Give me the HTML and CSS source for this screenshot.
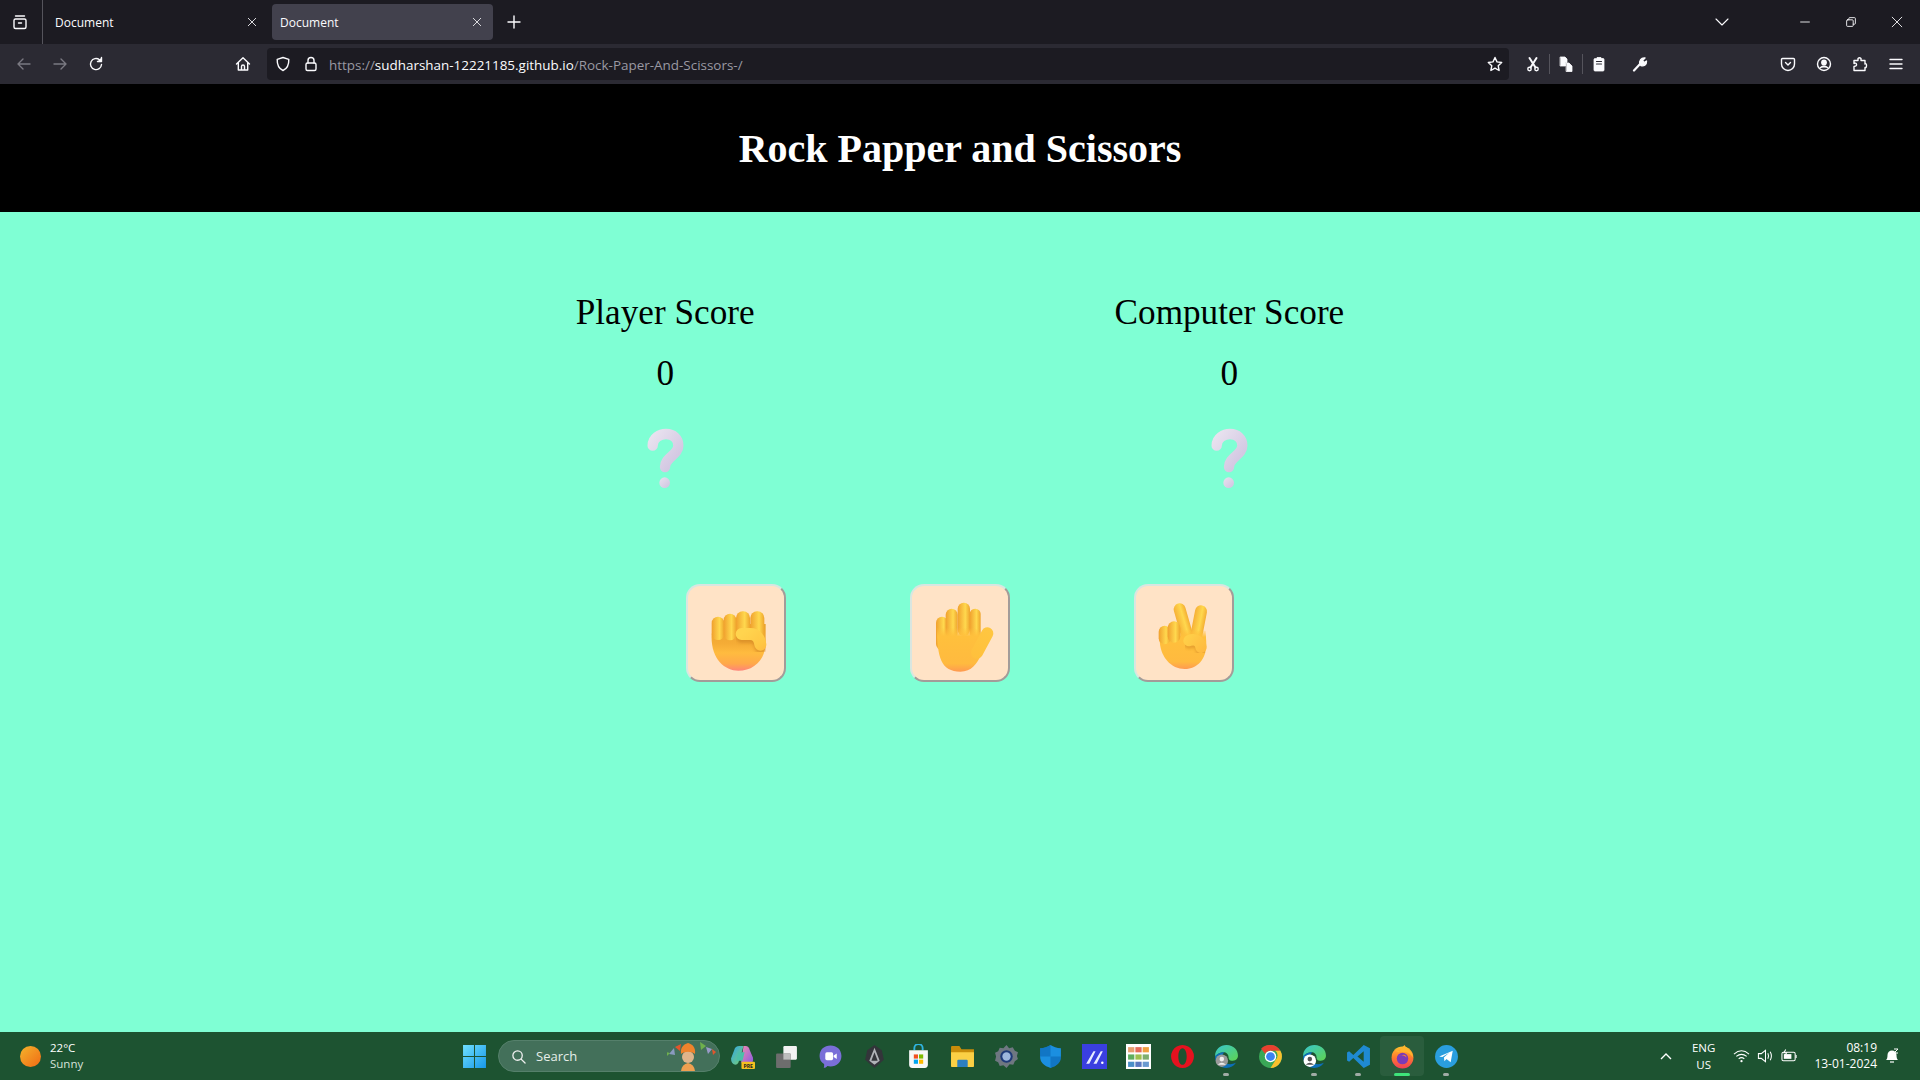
FILE: index.html
```html
<!DOCTYPE html>
<html lang="en">
<head>
<meta charset="utf-8">
<title>Document</title>
<link rel="stylesheet" href="styles.css">
</head>
<body>
<svg class="defs" width="0" height="0">
  <defs>
    <filter id="soft" x="-30%" y="-30%" width="160%" height="160%"><feGaussianBlur stdDeviation="5"/></filter>
    <linearGradient id="palm" x1="0" y1="0" x2="0" y2="1"><stop offset="0" stop-color="#e9a32c"/><stop offset=".42" stop-color="#f5ac36"/><stop offset=".62" stop-color="#ffbb3f"/><stop offset=".85" stop-color="#ffa94a"/><stop offset="1" stop-color="#ff8478"/></linearGradient>
    <linearGradient id="palm2" x1="0" y1="0" x2="0" y2="1"><stop offset="0" stop-color="#ffc03c" stop-opacity="0"/><stop offset=".2" stop-color="#ffc03c"/><stop offset=".82" stop-color="#ffba3f"/><stop offset="1" stop-color="#ff9a50"/></linearGradient>
    <linearGradient id="finger" x1="0" y1="0" x2="1" y2="0"><stop offset="0" stop-color="#f0a02e"/><stop offset=".62" stop-color="#ffd84e"/><stop offset="1" stop-color="#eea42c"/></linearGradient>
    <linearGradient id="fingerDown" x1="0" y1="0" x2="1" y2="0"><stop offset="0" stop-color="#f6b036"/><stop offset=".6" stop-color="#ffd84e"/><stop offset="1" stop-color="#f4ae32"/></linearGradient>
    <linearGradient id="thumb" gradientUnits="userSpaceOnUse" x1="190" y1="150" x2="245" y2="215"><stop offset="0" stop-color="#ffd44e"/><stop offset=".7" stop-color="#ffc744"/><stop offset="1" stop-color="#ffbb3f"/></linearGradient>
    <linearGradient id="thumbP" gradientUnits="userSpaceOnUse" x1="250" y1="150" x2="205" y2="235"><stop offset="0" stop-color="#ffc640"/><stop offset="1" stop-color="#ffc03c"/></linearGradient>
    <linearGradient id="thumbV" gradientUnits="userSpaceOnUse" x1="170" y1="170" x2="225" y2="215"><stop offset="0" stop-color="#ffcf48"/><stop offset="1" stop-color="#ffb83f"/></linearGradient>
    <linearGradient id="qm" x1="0" y1="0" x2="1" y2="1"><stop offset="0" stop-color="#e9e2ef"/><stop offset="1" stop-color="#cfc3e0"/></linearGradient>
    <linearGradient id="sun" x1="0" y1="0" x2="1" y2="1"><stop offset="0" stop-color="#f4b42c"/><stop offset="1" stop-color="#f06a14"/></linearGradient>
    <linearGradient id="win" x1="0" y1="0" x2="1" y2="1"><stop offset="0" stop-color="#6fe0ff"/><stop offset="1" stop-color="#1797e8"/></linearGradient>
    <linearGradient id="edge" x1="0" y1="0" x2="1" y2="1"><stop offset="0" stop-color="#37c6d0"/><stop offset="1" stop-color="#5fd34f"/></linearGradient>
    <linearGradient id="ff" x1="0" y1="0" x2="0" y2="1"><stop offset="0" stop-color="#ffc02e"/><stop offset=".5" stop-color="#ff7a2e"/><stop offset="1" stop-color="#f03e5a"/></linearGradient>
    <linearGradient id="copA" x1="0" y1="0" x2="1" y2="1"><stop offset="0" stop-color="#2ea8e8"/><stop offset="1" stop-color="#7fd06a"/></linearGradient>
    <linearGradient id="copB" x1="0" y1="0" x2="1" y2="1"><stop offset="0" stop-color="#f08ab0"/><stop offset="1" stop-color="#8a5ae0"/></linearGradient>
  </defs>
</svg>

<header class="browser">
  <div class="tabstrip">
    <span class="strip-btn"><svg class="ic" viewBox="0 0 16 16"><rect x="2" y="5" width="12" height="9.500" rx="1.500"/><path d="M3.500 2h9M6.500 9h3"/></svg></span>
    <div class="tab tab-first"><span class="tab-title">Document</span><svg class="tab-x" viewBox="0 0 10 10"><path d="M1 1l8 8M9 1l-8 8"/></svg></div>
    <div class="tab tab-active"><span class="tab-title">Document</span><svg class="tab-x" viewBox="0 0 10 10"><path d="M1 1l8 8M9 1l-8 8"/></svg></div>
    <span class="new-tab"><svg class="ic" viewBox="0 0 16 16"><path d="M8 2v12M2 8h12"/></svg></span>
    <span class="tab-list"><svg class="ic" viewBox="0 0 16 16"><path d="M2 5l6 6 6-6"/></svg></span>
    <span class="win-btn"><svg class="ic thin" viewBox="0 0 16 16"><path d="M3 8h10"/></svg></span>
    <span class="win-btn"><svg class="ic thin" viewBox="0 0 16 16"><rect x="3" y="5.500" width="7.500" height="7.500" rx="1"/><path d="M5.500 5.500V4q0-1 1-1h5.500q1 0 1 1v5.500q0 1-1 1h-1.500"/></svg></span>
    <span class="win-btn"><svg class="ic thin" viewBox="0 0 16 16"><path d="M2.500 2.500l11 11M13.500 2.500l-11 11"/></svg></span>
  </div>
  <nav class="toolbar">
    <span class="tb-btn dim"><svg class="ic" viewBox="0 0 16 16"><path d="M14 8H2M7 3L2 8l5 5"/></svg></span>
    <span class="tb-btn dim"><svg class="ic" viewBox="0 0 16 16"><path d="M2 8h12M9 3l5 5-5 5"/></svg></span>
    <span class="tb-btn"><svg class="ic" viewBox="0 0 16 16"><path d="M13.500 8.500A5.500 5.500 0 1 1 11.500 3.800"/><path d="M13.500 1.500v4h-4" class="fillme"/></svg></span>
    <span class="tb-btn home"><svg class="ic" viewBox="0 0 16 16"><path d="M1.500 8L8 1.800 14.500 8M3.300 6.500V14h9.400V6.500M6.500 14v-3.500q0-1.500 1.500-1.500t1.500 1.500V14"/></svg></span>
    <div class="urlbar">
      <svg class="ic url-shield" viewBox="0 0 16 16"><path d="M8 1.500l5.800 1.800c.2 5.500-1.800 9.500-5.800 11.200C4 12.800 2 8.800 2.200 3.300z"/></svg>
      <svg class="ic url-lock" viewBox="0 0 16 16"><rect x="3" y="7" width="10" height="7.500" rx="1.500"/><path d="M5 7V4.500a3 3 0 0 1 6 0V7"/></svg>
      <span class="url"><span class="url-dim">https://</span>sudharshan-12221185.github.io<span class="url-dim">/Rock-Paper-And-Scissors-/</span></span>
      <svg class="ic url-star" viewBox="0 0 16 16"><path d="M8 1.500l2 4.400 4.700.6-3.500 3.200.9 4.800L8 12.100l-4.100 2.400.9-4.800L1.300 6.500 6 5.900z"/></svg>
    </div>
    <span class="ext-btn ext-cut"><svg class="ic" viewBox="0 0 16 16"><circle cx="4.500" cy="13" r="1.700"/><circle cx="11.500" cy="13" r="1.700"/><path d="M5.500 11.500L11.500 2M10.500 11.500L4.500 2" stroke-width="2"/></svg></span>
    <i class="ext-sep"></i>
    <span class="ext-btn"><svg class="ic solid" viewBox="0 0 16 16"><path d="M2.500 1h4.500l2 2v3.500H7.500V10h-5z"/><path d="M8.500 7H11l3 3v5.500H8.500z"/></svg></span>
    <i class="ext-sep"></i>
    <span class="ext-btn"><svg class="ic solid" viewBox="0 0 16 16"><path d="M6 2.500V1.500h4v1h2q1 0 1 1v10.500q0 1-1 1H4q-1 0-1-1V3.500q0-1 1-1z"/><path class="cut" d="M5.500 5.500h5M5.500 8h5"/></svg></span>
    <span class="ext-btn wrench"><svg class="ic" viewBox="0 0 16 16"><path d="M2 14.500L8.500 7.500" stroke-width="2.200"/><path d="M8 8c-1-3 1-6.500 5-6l-2.500 2.500 1.500 2 2.500-1.500c.3 4-3 5.500-5.500 4.500z" class="fillme"/></svg></span>
    <span class="tb-btn pocket"><svg class="ic" viewBox="0 0 16 16"><path d="M2.500 2.500h11q1 0 1 1V8a6.500 6.500 0 0 1-13 0V3.500q0-1 1-1z"/><path d="M5.500 6.500L8 9l2.500-2.500"/></svg></span>
    <span class="tb-btn"><svg class="ic" viewBox="0 0 16 16"><circle cx="8" cy="8" r="6.500"/><circle cx="8" cy="6.500" r="2.200" class="fillme"/><path d="M4.500 11.500q3.500-2.500 7 0" class="fillme"/></svg></span>
    <span class="tb-btn"><svg class="ic" viewBox="0 0 16 16"><path d="M9 2.500q-1.500-1.500-3 0v2H2v3q2-1 2.500.800T2 10.500v4h11v-3q1.500.5 1.500-2T13 8V4.500H9z"/></svg></span>
    <span class="tb-btn"><svg class="ic" viewBox="0 0 16 16"><path d="M2 3.500h12M2 8h12M2 12.500h12"/></svg></span>
  </nav>
</header>

<div class="game-title"><h1>Rock Papper and Scissors</h1></div>

<main class="game">
  <section class="scores">
    <div class="score">
      <h2>Player Score</h2>
      <p class="points">0</p>
      <svg class="qmark" viewBox="60 40 150 195"><path d="M98 105C98 82 120 70 138 70c22 0 37 14 37 35 0 28-40 35-40 64" fill="none" stroke="url(#qm)" stroke-width="31" stroke-linecap="round"/><circle cx="134" cy="216" r="16" fill="url(#qm)"/></svg>
    </div>
    <div class="score">
      <h2>Computer Score</h2>
      <p class="points">0</p>
      <svg class="qmark" viewBox="60 40 150 195"><path d="M98 105C98 82 120 70 138 70c22 0 37 14 37 35 0 28-40 35-40 64" fill="none" stroke="url(#qm)" stroke-width="31" stroke-linecap="round"/><circle cx="134" cy="216" r="16" fill="url(#qm)"/></svg>
    </div>
  </section>
  <section class="choices">
    <button class="choice" type="button" aria-label="Rock">
      <svg class="hand" viewBox="26 22 270 270">
        <path d="M88 160C84 232 125 270 168 270c45 0 82-32 82-85V130H100z" fill="url(#palm)"/>
        <rect x="88" y="108" width="38" height="70" rx="19" fill="url(#finger)"/>
        <rect x="124" y="99" width="38" height="80" rx="19" fill="url(#finger)"/>
        <rect x="161" y="92" width="42" height="82" rx="20" fill="url(#finger)"/>
        <rect x="204" y="92" width="42" height="84" rx="20" fill="url(#finger)"/>
        <path d="M178 170h26c18 0 28 14 30 32" fill="none" stroke="#c87a1c" stroke-width="34" stroke-linecap="round" opacity=".5" filter="url(#soft)"/>
        <path d="M178 160h26c18 0 28 14 30 32" fill="none" stroke="url(#thumb)" stroke-width="36" stroke-linecap="round"/>
      </svg>
    </button>
    <button class="choice" type="button" aria-label="Paper">
      <svg class="hand" viewBox="26 22 270 270">
        <rect x="89" y="108" width="36" height="100" rx="18" fill="url(#finger)"/>
        <rect x="118" y="84" width="36" height="90" rx="18" fill="url(#finger)"/>
        <rect x="154" y="66" width="37" height="100" rx="18" fill="url(#finger)"/>
        <rect x="190" y="84" width="33" height="90" rx="16" fill="url(#finger)"/>
        <path d="M92 140C92 232 105 273 162 273c34 0 50-24 62-50l24-40-40-40z" fill="url(#palm2)"/>
        <path d="M212 216l31-58" fill="none" stroke="url(#thumbP)" stroke-width="36" stroke-linecap="round"/>
      </svg>
    </button>
    <button class="choice" type="button" aria-label="Scissors">
      <svg class="hand" viewBox="26 22 270 270">
        <g transform="rotate(-16 148 86)"><rect x="130" y="68" width="36" height="120" rx="18" fill="url(#fingerDown)"/></g>
        <g transform="rotate(11 212 92)"><rect x="194" y="74" width="36" height="110" rx="18" fill="url(#fingerDown)"/></g>
        <path d="M88 175c0 55 35 90 75 90 38 0 65-30 65-75l-2-40-116-5z" fill="url(#palm2)"/>
        <rect x="85" y="135" width="36" height="56" rx="18" fill="url(#finger)"/>
        <rect x="112" y="122" width="38" height="64" rx="19" fill="url(#finger)"/>
        <path d="M176 188c18-8 34 2 36 20" fill="none" stroke="#c87a1c" stroke-width="32" stroke-linecap="round" opacity=".45" filter="url(#soft)"/>
        <path d="M176 180c18-8 34 2 36 20" fill="none" stroke="url(#thumbV)" stroke-width="34" stroke-linecap="round"/>
      </svg>
    </button>
  </section>
</main>

<footer class="taskbar">
  <div class="weather">
    <svg class="sun" viewBox="0 0 20 20"><circle cx="10" cy="10" r="10" fill="url(#sun)"/></svg>
    <div class="weather-text"><span>22°C</span><span class="weather-sub">Sunny</span></div>
  </div>
  <div class="apps">
    <span class="app"><svg class="app-ic" viewBox="0 0 24 24"><path fill="url(#win)" d="M1 1h10.500v10.500H1zM12.500 1H23v10.500H12.500zM1 12.500h10.500V23H1zM12.500 12.500H23V23H12.500z"/></svg></span>
    <div class="search">
      <svg class="search-ic" viewBox="0 0 16 16"><circle cx="7" cy="7" r="5"/><path d="M10.800 10.800L15 15"/></svg>
      <span class="search-text">Search</span>
      <svg class="search-art" viewBox="0 0 50 30"><path d="M2 13l5-6 1 7z" fill="#8a9ac0"/><path d="M0 15l-1-4 4 1z" fill="#6fb04c"/><path d="M8 6l6-3-1 7z" fill="#e2552c"/><path d="M33 1l6 4-5 4z" fill="#6fb04c"/><path d="M39 6l6 2-4 5z" fill="#9a9ac8"/><path d="M45 8l4 3-3 3z" fill="#e2552c"/><path d="M14 30q1-7 7-8 6 1 7 8z" fill="#f0a050"/><circle cx="21" cy="16" r="6" fill="#e0b48a"/><path d="M14 13c-1-8 4-10 7-11 4 1 8 4 7 11-4-3-10-3-14 0z" fill="#f0832c"/></svg>
    </div>
    <span class="app"><svg class="app-ic" viewBox="0 0 24 24"><path d="M4 6q1-4 5-4h4l-3 10-2 6q-1 2-3 2-4-1-4-6z" fill="url(#copA)"/><path d="M13 2h2q3 0 4 4l3 7q1 5-3 6h-6q-3 0-2-4z" fill="url(#copB)"/><path d="M8 8h6l-2 8H6z" fill="#4bc0a8"/><rect x="11" y="17" width="13" height="7" rx="1" fill="#f4c020"/><text x="17.500" y="22.700" class="pre">PRE</text></svg></span>
    <span class="app"><svg class="app-ic" viewBox="0 0 24 24"><rect x="9" y="2" width="13" height="13" rx="1" fill="#f2f2f2"/><rect x="2" y="9" width="14" height="14" rx="1" fill="#6d6d6d"/><rect x="9" y="9" width="7" height="6" fill="#bdbdbd"/></svg></span>
    <span class="app"><svg class="app-ic" viewBox="0 0 24 24"><path d="M12 1.500c6 0 10.500 4 10.500 10S18 21.500 12 21.500c-1 0-2-.1-3-.4-1 1.300-2.300 1.900-3.500 1.600.5-1 .5-2.500.3-3.500C3 17.500 1.500 15 1.500 11.500c0-6 4.500-10 10.500-10z" fill="#7a6fd8"/><rect x="7" y="8" width="7.500" height="7.500" rx="1.500" fill="#fff"/><path d="M15 11l3-2v5.500l-3-2z" fill="#fff"/></svg></span>
    <span class="app"><svg class="app-ic" viewBox="0 0 24 24"><path d="M12 1l7 5 2 9-9 8-9-8 2-9z" fill="#33353a"/><path d="M12 3.500l5 12.500-5 4-5-4z" fill="#b0b3b8"/><path d="M12 8l3 8H9z" fill="#33353a"/></svg></span>
    <span class="app"><svg class="app-ic" viewBox="0 0 24 24"><path d="M8 6V4a4 4 0 0 1 8 0v2" fill="none" stroke="#2fb4e0" stroke-width="1.800"/><path d="M3 6h18v14q0 3-3 3H6q-3 0-3-3z" fill="#f7f7f7"/><path d="M7.500 10h4v4h-4z" fill="#f25022"/><path d="M12.500 10h4v4h-4z" fill="#7fba00"/><path d="M7.500 15h4v4h-4z" fill="#00a4ef"/><path d="M12.500 15h4v4h-4z" fill="#ffb900"/></svg></span>
    <span class="app"><svg class="app-ic" viewBox="0 0 24 24"><path d="M1 3q0-1 1-1h7l2 3h12v16q0 1-1 1H2q-1 0-1-1z" fill="#c88c0a"/><path d="M1 8h22v13q0 1-1 1H2q-1 0-1-1z" fill="#fbd045"/><path d="M8 15h8q1 0 1 1v6H7v-6q0-1 1-1z" fill="#2d7fc0"/></svg></span>
    <span class="app"><svg class="app-ic" viewBox="0 0 24 24"><path d="M12 1l2.500 3 3.500-1 2 3.500 3 1.500-1 3.500 1 3-3 2-1.500 3.500-3.500-.5L12 23l-3-2.500-3.500.5L4 17.500 1 16l1-4-1-3.500L4 7l1.500-3.500L9 4z" fill="#6f7781"/><circle cx="12" cy="12" r="6" fill="#1f3a78"/><circle cx="12" cy="12" r="4" fill="#9db6dd"/></svg></span>
    <span class="app"><svg class="app-ic" viewBox="0 0 24 24"><path d="M12 1c3 2 6 3 10 3v8c0 6-4 9-10 11C6 21 2 18 2 12V4c4 0 7-1 10-3z" fill="#1b8fe0"/><path d="M12 12h10c0 6-4 9-10 11zM2 12h10V1C9 3 6 4 2 4z" fill="#0a63ae" opacity=".55"/></svg></span>
    <span class="app"><svg class="app-ic" viewBox="0 0 24 24"><rect x="0" y="0" width="24" height="24" fill="#3a3fe0"/><path d="M4 19L11 7h2L7 19zM11 19l7-12h2l-6 12z" fill="#e8ecff"/><circle cx="19.500" cy="18" r="1.200" fill="#fff"/></svg></span>
    <span class="app"><svg class="app-ic" viewBox="0 0 24 24"><rect width="24" height="24" fill="#fff"/><path d="M2 3h6v5H2z" fill="#e8a070"/><path d="M9 3h6v5H9z" fill="#e56a5a"/><path d="M16 3h6v5h-6z" fill="#f0a040"/><path d="M2 10h6v5H2z" fill="#5fae5f"/><path d="M9 10h6v5H9z" fill="#9fc04f"/><path d="M16 10h6v5h-6z" fill="#7fae70"/><path d="M2 17h6v5H2z" fill="#4a8fc8"/><path d="M9 17h6v5H9z" fill="#5a78c0"/><path d="M16 17h6v5h-6z" fill="#6a9ad0"/></svg></span>
    <span class="app"><svg class="app-ic" viewBox="0 0 24 24"><path fill-rule="evenodd" d="M12 1a11 11 0 1 0 .01 0zM12 4c-2.500 0-4 3.500-4 8s1.500 8 4 8 4-3.500 4-8-1.500-8-4-8z" fill="#e5121f"/></svg></span>
    <span class="app has-dot"><svg class="app-ic" viewBox="0 0 24 24"><path d="M1 12C1 5 6 1 12 1c7 0 11 5 11 10 0 4-3 5-6 5-2 0-3-1-3-3 0-3-2-5-5-5-4 0-7 3-8 4z" fill="url(#edge)"/><path d="M1 12c0 7 5 11 11 11 4 0 7-2 9-5-6 3-13 1-13-6 0-2 1-3 2-4-4 0-8 2-9 4z" fill="#0c6fb8"/><circle cx="7.500" cy="16" r="6" fill="#9a9a9a"/><circle cx="7.500" cy="14.500" r="2.200" fill="#eee"/><path d="M3.500 20q4-4 8 0z" fill="#eee"/></svg></span>
    <span class="app"><svg class="app-ic" viewBox="0 0 24 24"><circle cx="12" cy="12" r="11" fill="#3aa757"/><path d="M12 1a11 11 0 0 1 9.500 5.500H12a5.500 5.500 0 0 0-5 3L3 4.500A11 11 0 0 1 12 1z" fill="#e8402f"/><path d="M21.500 6.500A11 11 0 0 1 12 23l5-8a5.500 5.500 0 0 0-.500-8.500z" fill="#fbc02d"/><circle cx="12" cy="12" r="5.500" fill="#fff"/><circle cx="12" cy="12" r="4.200" fill="#3b82f0"/></svg></span>
    <span class="app has-dot"><svg class="app-ic" viewBox="0 0 24 24"><path d="M1 12C1 5 6 1 12 1c7 0 11 5 11 10 0 4-3 5-6 5-2 0-3-1-3-3 0-3-2-5-5-5-4 0-7 3-8 4z" fill="url(#edge)"/><path d="M1 12c0 7 5 11 11 11 4 0 7-2 9-5-6 3-13 1-13-6 0-2 1-3 2-4-4 0-8 2-9 4z" fill="#0c6fb8"/><circle cx="7.500" cy="16" r="6" fill="#fff"/><circle cx="7.500" cy="14.500" r="2.200" fill="#555"/><path d="M3.500 20q4-4 8 0z" fill="#555"/></svg></span>
    <span class="app has-dot"><svg class="app-ic" viewBox="0 0 24 24"><path d="M17 1l6 3v16l-6 3L7 13.500 3 17l-2-1.200V8.200L3 7l4 3.500z" fill="#1f8ad2"/><path d="M17 7l-6 5 6 5z" fill="#1d5432"/></svg></span>
    <span class="app app-current"><svg class="app-ic" viewBox="0 0 24 24"><circle cx="12" cy="13" r="10.500" fill="url(#ff)"/><path d="M4 5c2 2 3 3 5 3 1-3 3-5 5-7 1 3 8 5 8 12-3-5-7-6-10-5z" fill="#ffb52e"/><circle cx="12" cy="14" r="5.500" fill="#7a3bb8"/><path d="M8 12q4-3 8 1-1-5-8-1z" fill="#ff8a2e"/></svg></span>
    <span class="app has-dot"><svg class="app-ic" viewBox="0 0 24 24"><circle cx="12" cy="12" r="11" fill="#2a9ede"/><path d="M5 12l13-5.500-2 11-4-3-2 2-.5-3.500 5-4.500-6.500 4z" fill="#fff"/></svg></span>
  </div>
  <div class="tray">
    <svg class="tray-chev" viewBox="0 0 12 8"><path d="M1 7l5-5 5 5"/></svg>
    <div class="lang"><span>ENG</span><span>US</span></div>
    <svg class="tray-ic" viewBox="0 0 18 16"><path d="M1 6q8-7 16 0M3.500 8.500q5.500-4.500 11 0M6 11q3-2.500 6 0"/><circle cx="9" cy="13.500" r="1.200" class="tray-fill"/></svg>
    <svg class="tray-ic" viewBox="0 0 18 16"><path d="M1.500 5.500h3L9 2v12l-4.500-3.500h-3zM11.500 5q1.500 3 0 6M14 3.500q2.500 4.500 0 9"/></svg>
    <svg class="tray-ic" viewBox="0 0 18 16"><rect x="1" y="4" width="14" height="9" rx="1.500"/><rect x="3" y="6" width="8" height="5" class="tray-fill"/><path d="M16 7v3M5 1L3 4.500h3L4 8" /></svg>
    <div class="clock"><span>08:19</span><span>13-01-2024</span></div>
    <svg class="tray-bell" viewBox="0 0 16 16"><path d="M2 12q1.500-1 1.500-5a4.500 4.500 0 0 1 9 0q0 4 1.500 5z" class="tray-fill"/><path d="M6 14h4" /><path d="M10 1h4l-4 4h4" class="dark"/></svg>
  </div>
</footer>
</body>
</html>
```
FILE: styles.css
```css
* { box-sizing: border-box; }
html, body { margin: 0; height: 100%; }
body {
  display: flex;
  flex-direction: column;
  height: 1080px;
  overflow: hidden;
  background: #7fffd4;
  font-family: "Liberation Serif", serif;
}
.defs { position: absolute; }

/* browser chrome */
.browser { background: #1c1b22; color: #fbfbfe; font-family: "Open Sans", "Noto Sans", sans-serif; }
.ic { width: 16px; height: 16px; fill: none; stroke: #fbfbfe; stroke-width: 1.400; stroke-linecap: round; stroke-linejoin: round; display: block; }
.ic.thin { stroke-width: 1; width: 14px; height: 14px; }
.ic.solid { fill: #fbfbfe; stroke: #fbfbfe; stroke-width: .8; }
.ic .cut { stroke: #2b2a33; stroke-width: 1.200; fill: none; }
.ic .fillme { fill: #fbfbfe; }

.tabstrip { display: flex; align-items: center; height: 44px; }
.strip-btn { flex: none; display: flex; align-items: center; justify-content: center; width: 43px; height: 44px; padding-right: 2px; border-right: 1px solid #55545c; }
.tab { flex: none; display: flex; align-items: center; justify-content: space-between; height: 36px; font-size: 12px; border-radius: 4px; }
.tab-first { width: 219px; padding: 0 5px 0 12px; }
.tab-active { width: 221px; margin-left: 10px; padding: 0 11px 0 8px; background: #42414d; }
.tab-x { width: 10px; height: 10px; fill: none; stroke: #d8d8dc; stroke-width: 1; }
.new-tab { flex: none; display: flex; justify-content: center; width: 42px; }
.tab-list { flex: none; margin-left: auto; margin-right: 52px; width: 16px; }
.tab-list .ic { stroke-width: 1.100; }
.win-btn { flex: none; display: flex; justify-content: center; width: 46px; }

.toolbar { display: flex; align-items: center; height: 40px; padding-left: 6px; background: #2b2a33; }
.tb-btn { flex: none; display: flex; align-items: center; justify-content: center; width: 36px; height: 32px; }
.tb-btn.dim .ic { stroke: #7a7982; }
.tb-btn.home { margin-left: 111px; margin-right: 6px; }
.urlbar { flex: none; display: flex; align-items: center; width: 1242px; height: 32px; padding: 0 6px 0 8px; background: #1c1b22; border-radius: 4px; }
.url-lock { margin-left: 12px; }
.url { margin-left: 10px; padding-top: 2px; flex: 1; font-size: 13.440px; white-space: nowrap; color: #fbfbfe; }
.url-dim { color: #9a99a2; }
.ext-btn { flex: none; display: flex; align-items: center; justify-content: center; width: 32px; height: 32px; }
.ext-cut { margin-left: 8px; }
.ext-sep { flex: none; width: 1px; height: 20px; background: #55545c; }
.ext-btn.wrench { margin-left: 9px; }
.tb-btn.pocket { margin-left: 114px; }

/* page */
.game-title { flex: none; display: flex; align-items: center; justify-content: center; height: 128px; background: #000; color: #fff; }
.game-title h1 { margin: 0; font-size: 40px; font-weight: 700; }
.game { flex: 1; display: flex; flex-direction: column; align-items: center; }
.scores { display: flex; justify-content: center; gap: 360px; margin-top: 80px; }
.score { display: flex; flex-direction: column; align-items: center; }
.score h2 { margin: 0; font-size: 35.200px; font-weight: 400; line-height: 42px; }
.points { margin: 19px 0 0; font-size: 35.200px; line-height: 42px; }
.qmark { width: 50px; height: 65px; margin-top: 29px; display: block; }
.choices { display: flex; gap: 124px; margin-top: 95px; }
.choice { display: flex; align-items: center; justify-content: center; width: 100px; height: 98px; padding: 0; background: #ffe3c6; border: 2px solid; border-color: #d9e6e0 #a39c99 #a39c99 #d9e6e0; border-radius: 14px; }
.hand { width: 90px; height: 90px; flex: none; display: block; }

/* taskbar */
.taskbar { flex: none; display: grid; grid-template-columns: 1fr auto 1fr; align-items: center; height: 48px; background: #1d5331; color: #fff; font-family: "Open Sans", "Noto Sans", sans-serif; font-size: 12px; }
.weather { display: flex; align-items: center; padding-left: 20px; }
.sun { width: 21px; height: 21px; margin-right: 9px; flex: none; }
.weather-text { display: flex; flex-direction: column; line-height: 16px; font-size: 11.500px; }
.weather-sub { color: #d6e2da; }
.apps { display: flex; align-items: center; height: 48px; }
.app { position: relative; display: flex; align-items: center; justify-content: center; width: 44px; height: 40px; }
.app-ic { width: 25px; height: 25px; display: block; }
.pre { font: 700 5px "Open Sans", sans-serif; text-anchor: middle; fill: #222; }
.app-current { background: rgba(255, 255, 255, .06); border-radius: 4px; }
.app-current::after { content: ""; position: absolute; left: 14px; right: 14px; bottom: 0; height: 3px; border-radius: 2px; background: #3ee47a; }
.has-dot::after { content: ""; position: absolute; left: 19px; right: 19px; bottom: 0; height: 3px; border-radius: 2px; background: #a0aca5; }
.search { flex: none; display: flex; align-items: center; width: 222px; height: 32px; margin: 0 0 0 2px; padding: 0 2px 0 12px; background: #43705a; border: 1px solid #55806b; border-radius: 16px; color: #e6eee9; font-size: 13px; }
.search-ic { width: 15px; height: 15px; fill: none; stroke: #f0f0f0; stroke-width: 1.400; stroke-linecap: round; flex: none; }
.search-text { margin-left: 10px; flex: 1; }
.search-art { width: 50px; height: 30px; flex: none; }
.tray { display: flex; align-items: center; justify-content: flex-end; }
.tray-chev { width: 12px; height: 8px; margin-right: 20px; fill: none; stroke: #fff; stroke-width: 1.400; }
.lang { display: flex; flex-direction: column; align-items: center; line-height: 17px; font-size: 11.500px; margin-right: 18px; }
.tray-ic { width: 17px; height: 16px; margin-right: 7px; fill: none; stroke: #fff; stroke-width: 1.100; }
.tray-fill { fill: #fff; stroke: none; }
.clock { display: flex; flex-direction: column; align-items: flex-end; line-height: 16px; font-size: 12px; margin-left: 9px; }
.tray-bell { width: 16px; height: 16px; margin: 0 20px 0 7px; fill: none; stroke: #fff; stroke-width: 1.200; }
.tray-bell .dark { stroke: #fff; stroke-width: 1; }
```
